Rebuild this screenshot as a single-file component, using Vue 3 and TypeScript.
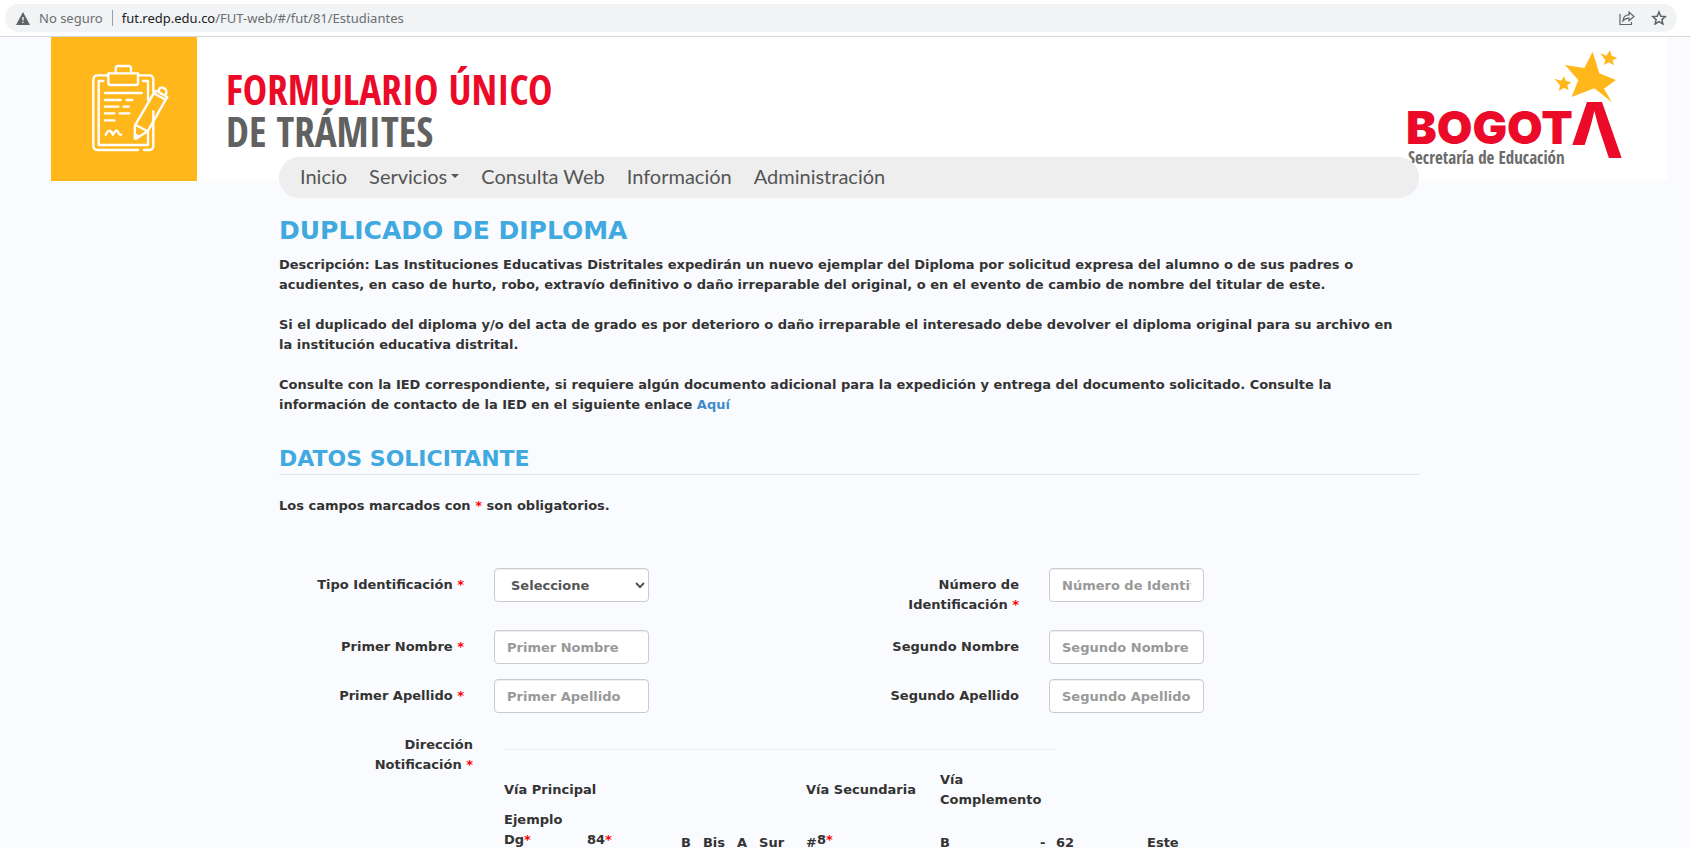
<script setup lang="ts">
interface Field {
  id: string
  label: string
  required: boolean
  kind: 'select' | 'text'
}

const menu: { label: string; dropdown?: boolean }[] = [
  { label: 'Inicio' },
  { label: 'Servicios', dropdown: true },
  { label: 'Consulta Web' },
  { label: 'Información' },
  { label: 'Administración' },
]

const rows: Field[][] = [
  [
    { id: 'tipo-id', label: 'Tipo Identificación', required: true, kind: 'select' },
    { id: 'numero-id', label: 'Número de Identificación', required: true, kind: 'text' },
  ],
  [
    { id: 'primer-nombre', label: 'Primer Nombre', required: true, kind: 'text' },
    { id: 'segundo-nombre', label: 'Segundo Nombre', required: false, kind: 'text' },
  ],
  [
    { id: 'primer-apellido', label: 'Primer Apellido', required: true, kind: 'text' },
    { id: 'segundo-apellido', label: 'Segundo Apellido', required: false, kind: 'text' },
  ],
]
</script>

<template>
  <div class="page">
    <div class="toolbar">
      <div class="omnibox">
        <svg class="warn" viewBox="0 0 14 13" aria-hidden="true">
          <path d="M7 0 14 13H0Z" fill="#5f6368" />
          <path d="M6.3 5h1.4v3.5H6.3zM6.3 9.7h1.4v1.4H6.3z" fill="#f1f3f4" />
        </svg>
        <span class="insecure">No seguro</span>
        <span class="divider"></span>
        <span class="url"><b>fut.redp.edu.co</b>/FUT-web/#/fut/81/Estudiantes</span>
        <button class="tool" type="button" aria-label="Compartir">
          <svg width="16" height="16" viewBox="0 0 16 16" fill="none" stroke="#5f6368" stroke-width="1.2">
            <path d="M1 4v10.500h11.500v-2.500" />
            <path d="M4 11C4 7 6.500 4.800 10 4.800V2l5 4.500-5 4.300V8.200C7.500 8.200 5.500 9 4 11Z" />
          </svg>
        </button>
        <button class="tool" type="button" aria-label="Agregar a favoritos">
          <svg width="16" height="16" viewBox="0 0 16 16" fill="none" stroke="#5f6368" stroke-width="1.500">
            <path d="M8 2 9.800 6.200 14.300 6.600 10.900 9.600 11.900 14 8 11.700 4.100 14 5.100 9.600 1.700 6.600 6.200 6.200Z" />
          </svg>
        </button>
      </div>
    </div>

    <header class="banner">
      <div class="tile">
        <svg width="100" height="120" viewBox="0 0 300 360" fill="none" stroke="#fff" stroke-width="7" stroke-linecap="round" stroke-linejoin="round" aria-hidden="true">
          <path d="M84 76H53Q40 76 40 89V288Q40 300 53 300H174" />
          <path d="M176 76H207Q220 76 220 89V124M220 184V288Q220 300 207 300H192" />
          <path d="M70 93H56V285H204V248M189 93H204V150" />
          <path d="M85 70H174V99Q174 105 168 105H91Q85 105 85 99Z" />
          <path d="M107 68V55Q107 48 114 48H146Q153 48 153 55V68" />
          <path d="M75 129H185M75 150H122M140 150H157M75 170H115M131 170H146M75 190H103M119 190H148M75 211H103" />
          <path d="M77 254Q87 235 94 246L99 254Q110 233 115 248Q118 255 123 254" />
          <path d="M221 130 165 226 164 264Q165 268 170 265L203 244 257 149Z" />
          <path d="M166 224 203 244M221 130 228 122 262 141 257 149M237 123Q236 111 248 113Q261 117 259 130L255 136" />
          <path d="M167 254 177 260 168 265Z" fill="#fff" />
        </svg>
      </div>
      <h1 class="title"><span class="red">FORMULARIO ÚNICO</span><br />DE TRÁMITES</h1>
      <svg class="logo" width="220" height="125" viewBox="0 0 220 125" role="img" aria-label="Bogotá, Secretaría de Educación">
        <defs>
          <clipPath id="roof"><path d="M150 50H220V125H184V100H150Z" /></clipPath>
        </defs>
        <g fill="#ffb71b" transform="translate(-25 -45) scale(.3333)">
          <path d="M635 155 655 220 705 240 669 266 693 307 640 265 572 291 592 240 552 195 610 204Z" />
          <path d="M687 151 692 167 709 174 695 181 699 196 684 187 669 195 673 180 658 160 676 167Z" />
          <path d="M549 229 554 242 571 247 559 256 563 271 549 263 534 273 537 256 521 236 541 242Z" />
        </g>
        <text x="0" y="99" class="city">BOGOT</text>
        <text x="160" y="113" class="roof" clip-path="url(#roof)">Λ</text>
        <text x="2" y="119" class="dept">Secretaría de Educación</text>
      </svg>
    </header>

    <div class="container">
      <nav class="menu">
        <a v-for="m in menu" :key="m.label" href="#">{{ m.label }}<i v-if="m.dropdown" class="caret"></i></a>
      </nav>

      <main>
        <h2>DUPLICADO DE DIPLOMA</h2>
        <p>
          <strong>Descripción:</strong> Las Instituciones Educativas Distritales expedirán un nuevo ejemplar del Diploma por solicitud expresa del alumno o de sus padres o<br />
          acudientes, en caso de hurto, robo, extravío definitivo o daño irreparable del original, o en el evento de cambio de nombre del titular de este.
        </p>
        <p>
          Si el duplicado del diploma y/o del acta de grado es por deterioro o daño irreparable el interesado debe devolver el diploma original para su archivo en<br />
          la institución educativa distrital.
        </p>
        <p>
          Consulte con la IED correspondiente, si requiere algún documento adicional para la expedición y entrega del documento solicitado. Consulte la<br />
          información de contacto de la IED en el siguiente enlace <a class="link" href="#">Aquí</a>
        </p>

        <h3>DATOS SOLICITANTE</h3>
        <p class="note">Los campos marcados con <span class="req">*</span> son obligatorios.</p>

        <form>
          <div v-for="(row, i) in rows" :key="i" class="row">
            <template v-for="f in row" :key="f.id">
              <label :for="f.id">{{ f.label }} <span v-if="f.required" class="req">*</span></label>
              <select v-if="f.kind === 'select'" :id="f.id" class="control">
                <option>Seleccione</option>
              </select>
              <input v-else :id="f.id" class="control" type="text" :placeholder="f.label" />
            </template>
          </div>

          <div class="address">
            <div class="address-label">Dirección Notificación <span class="req">*</span></div>
            <div class="address-body">
              <hr />
              <table>
                <colgroup>
                  <col class="c83" /><col class="c94" /><col class="c125" /><col class="c134" />
                  <col class="c100" /><col class="c16" /><col class="c91" /><col class="c91" />
                </colgroup>
                <tbody>
                  <tr>
                    <td colspan="3">Vía Principal</td>
                    <td>Vía Secundaria</td>
                    <td>Vía Complemento</td>
                    <td colspan="3"></td>
                  </tr>
                  <tr class="example">
                    <td class="raised">Ejemplo<br />Dg<span class="req">*</span></td>
                    <td class="raised">84<span class="req">*</span></td>
                    <td><div class="parts"><span>B</span><span>Bis</span><span>A</span><span>Sur</span></div></td>
                    <td><div class="pair"><span>#</span><span class="raised">8<span class="req">*</span></span></div></td>
                    <td>B</td>
                    <td>-</td>
                    <td>62</td>
                    <td>Este</td>
                  </tr>
                </tbody>
              </table>
            </div>
          </div>
        </form>
      </main>
    </div>
  </div>
</template>

<style>
html { overflow: hidden; }
body { margin: 0; background: #fafbfe; }
</style>

<style scoped>
* { box-sizing: border-box; }
.page {
  height: 100vh;
  overflow: hidden;
  color: #333;
  background: #fafbfe;
  font: 700 13px/20px "DejaVu Sans", Verdana, sans-serif;
}
.toolbar {
  padding: 4px 13px 4px 5px;
  background: #fff;
  border-bottom: 1px solid #d5d7da;
}
.omnibox {
  display: flex;
  align-items: center;
  height: 28px;
  padding: 0 10px 0 11px;
  border-radius: 14px;
  background: #f1f3f4;
  color: #6a6e73;
  font: 400 13px/20px "Noto Sans", sans-serif;
}
.warn { width: 14px; height: 13px; margin-right: 9px; }
.divider { width: 1px; height: 16px; margin: 0 9px; background: #9aa0a6; }
.url { margin-right: auto; }
.url b { font-weight: 400; color: #202124; }
.tool { display: flex; padding: 0; border: 0; background: none; margin-left: 16px; }

.banner {
  display: flex;
  height: 144px;
  margin: 0 23px 0 51px;
  padding-right: 41px;
  background: #fff;
}
.tile {
  width: 146px;
  padding: 13px 0 0 29px;
  background: #ffb71b;
}
.title {
  margin: 31px 0 0 29px;
  color: #616161;
  font: 700 41px/42px "Open Sans Condensed", "Roboto Condensed", sans-serif;
}
.red { color: #eb0a28; }
.logo { margin: 8px 0 0 auto; }
.city, .roof { fill: #eb0a28; font-family: Inter, sans-serif; }
.city { font-size: 46px; font-weight: 900; }
.roof { font-size: 77px; font-weight: 700; }
.dept { fill: #6b6b6b; font: 700 17px "Open Sans Condensed", "Roboto Condensed", sans-serif; }

.container {
  position: relative;
  width: 1140px;
  max-width: 100%;
  margin: -24px auto 0;
  left: 4px;
}
.menu {
  display: flex;
  height: 41px;
  padding: 0 10px 3px;
  border-radius: 21px;
  background: #eee;
  font: 400 20px/38px Lato, sans-serif;
}
.menu a { display: flex; align-items: center; padding: 0 11px; color: #555; text-decoration: none; }
.caret {
  margin-left: 4px;
  border: 4px solid transparent;
  border-top-color: #555;
  border-bottom: 0;
}
h2, h3 { margin: 0; color: #40a9e0; font-weight: 700; }
h2 { padding-top: 18px; margin-bottom: 9px; font-size: 25px; line-height: 30px; }
p { margin: 0 0 20px; }
.link { color: #428bca; text-decoration: none; }
h3 {
  margin-top: 32px;
  padding-bottom: 3px;
  border-bottom: 1px solid #e5e5e5;
  font-size: 22px;
  line-height: 24px;
}
.note { margin: 21px 0 52px; }
.req { color: #f00; }

.row {
  display: grid;
  grid-template-columns: 185px 155px 340px 155px;
  column-gap: 30px;
  margin-bottom: 15px;
  align-items: start;
}
.row label { padding-top: 7px; text-align: right; }
.row label:nth-of-type(2) { padding-left: 185px; }
.control {
  width: 100%;
  height: 34px;
  padding: 6px 12px;
  border: 1px solid #ccc;
  border-radius: 4px;
  background: #fff;
  box-shadow: inset 0 1px 1px rgba(0, 0, 0, 0.075);
  color: #555;
  font: inherit;
}
.control::placeholder { color: #999; opacity: 1; }
.address { display: flex; }
.address-label { width: 194px; padding: 7px 0 0 74px; text-align: right; }
.address-body { margin-left: 31px; }
hr { width: 552px; margin: 21px 0 20px; border: 0; border-top: 1px solid #eee; }
table { width: 734px; table-layout: fixed; border-collapse: collapse; }
td { padding: 0; vertical-align: middle; }
.example td { vertical-align: bottom; white-space: nowrap; }
.raised, .example .raised { padding-bottom: 3px; }
.parts { display: flex; gap: 12px; }
.pair { display: flex; align-items: flex-end; }
.c83 { width: 83px; }
.c94 { width: 94px; }
.c125 { width: 125px; }
.c134 { width: 134px; }
.c100 { width: 100px; }
.c16 { width: 16px; }
.c91 { width: 91px; }
</style>
